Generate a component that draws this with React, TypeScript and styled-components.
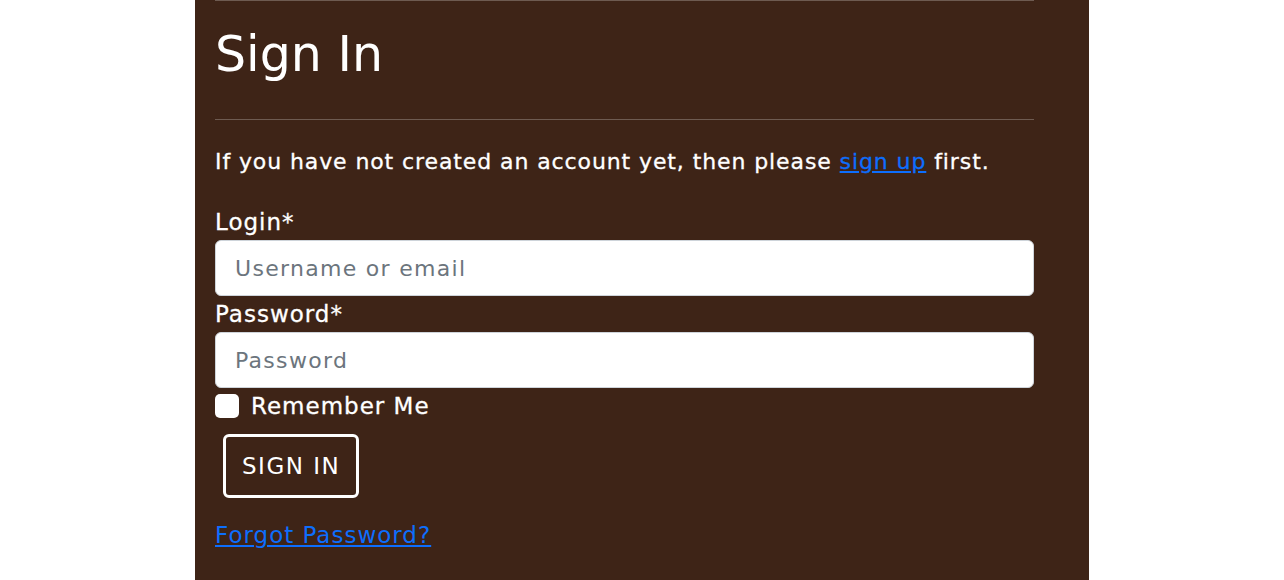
import React from 'react'
import styled, { createGlobalStyle } from 'styled-components';

const GlobalStyle = createGlobalStyle`
  body {
    margin: 0;
    background: #ffffff;
    font-family: "DejaVu Sans", "Liberation Sans", sans-serif;
  }
`;

const Panel = styled.div`
    width: 894px;
    min-height: 580px;
    margin: 0 auto;
    box-sizing: border-box;
    padding: 0 55px 20px 20px;
    background: #3e2417;
    color: #ffffff;
`;

const Rule = styled.hr`
    margin: 0;
    border: 0;
    border-top: 1px solid rgba(255, 255, 255, 0.25);
`;

const Title = styled.h1`
    margin: 25px 0 35px;
    font-size: 49px;
    line-height: 58px;
    font-weight: 400;
`;

const Intro = styled.p`
    margin: 27px 0 0;
    font-size: 22px;
    line-height: 30px;
    letter-spacing: 0.9px;
    -webkit-text-stroke: 0.3px currentColor;
`;

const Link = styled.a`
    color: #0d6efd;
    text-decoration: underline;
`;

const Form = styled.form`
    display: flex;
    flex-direction: column;
    align-items: flex-start;
    margin-top: 30px;
`;

const Label = styled.label<{ $gap?: number }>`
    margin-top: ${p => p.$gap ?? 3}px;
    font-size: 23px;
    line-height: 30px;
    letter-spacing: 1px;
    -webkit-text-stroke: 0.3px currentColor;
`;

const Input = styled.input`
    align-self: stretch;
    box-sizing: border-box;
    height: 56px;
    margin-top: 3px;
    padding: 0 19px;
    border: 1px solid #ced4da;
    border-radius: 6px;
    background: #ffffff;
    font-family: inherit;
    font-size: 22px;
    letter-spacing: 1.3px;
    color: #212529;
    &::placeholder {
        color: #6c757d;
    }
`;

const CheckRow = styled.label`
    display: flex;
    align-items: center;
    gap: 12px;
    margin-top: 6px;
    font-size: 23px;
    line-height: 24px;
    letter-spacing: 1px;
    -webkit-text-stroke: 0.3px currentColor;
`;

const Box = styled.span`
    width: 24px;
    height: 24px;
    box-sizing: border-box;
    border-radius: 5px;
    background: #ffffff;
`;

const Button = styled.button`
    display: inline-flex;
    align-items: center;
    height: 64px;
    margin: 16px 0 0 8px;
    padding: 0 16px;
    box-sizing: border-box;
    border: 3px solid #ffffff;
    border-radius: 6px;
    background: transparent;
    color: #ffffff;
    font-family: inherit;
    font-size: 23px;
    letter-spacing: 1.5px;
    text-transform: uppercase;
    cursor: pointer;
`;

const Forgot = styled(Link)`
    margin-top: 22px;
    font-size: 23px;
    line-height: 30px;
    letter-spacing: 1px;
`;

const App = () => {
  return (
    <>
      <GlobalStyle />
      <Panel>
        <Rule />
        <Title>Sign In</Title>
        <Rule />
        <Intro>
          If you have not created an account yet, then please <Link href="#">sign up</Link> first.
        </Intro>
        <Form onSubmit={e => e.preventDefault()}>
          <Label $gap={0}>Login*</Label>
          <Input placeholder="Username or email" />
          <Label>Password*</Label>
          <Input type="password" placeholder="Password" />
          <CheckRow>
            <Box />
            Remember Me
          </CheckRow>
          <Button type="submit">Sign In</Button>
          <Forgot href="#">Forgot Password?</Forgot>
        </Form>
      </Panel>
    </>
  )
}

export default App;
